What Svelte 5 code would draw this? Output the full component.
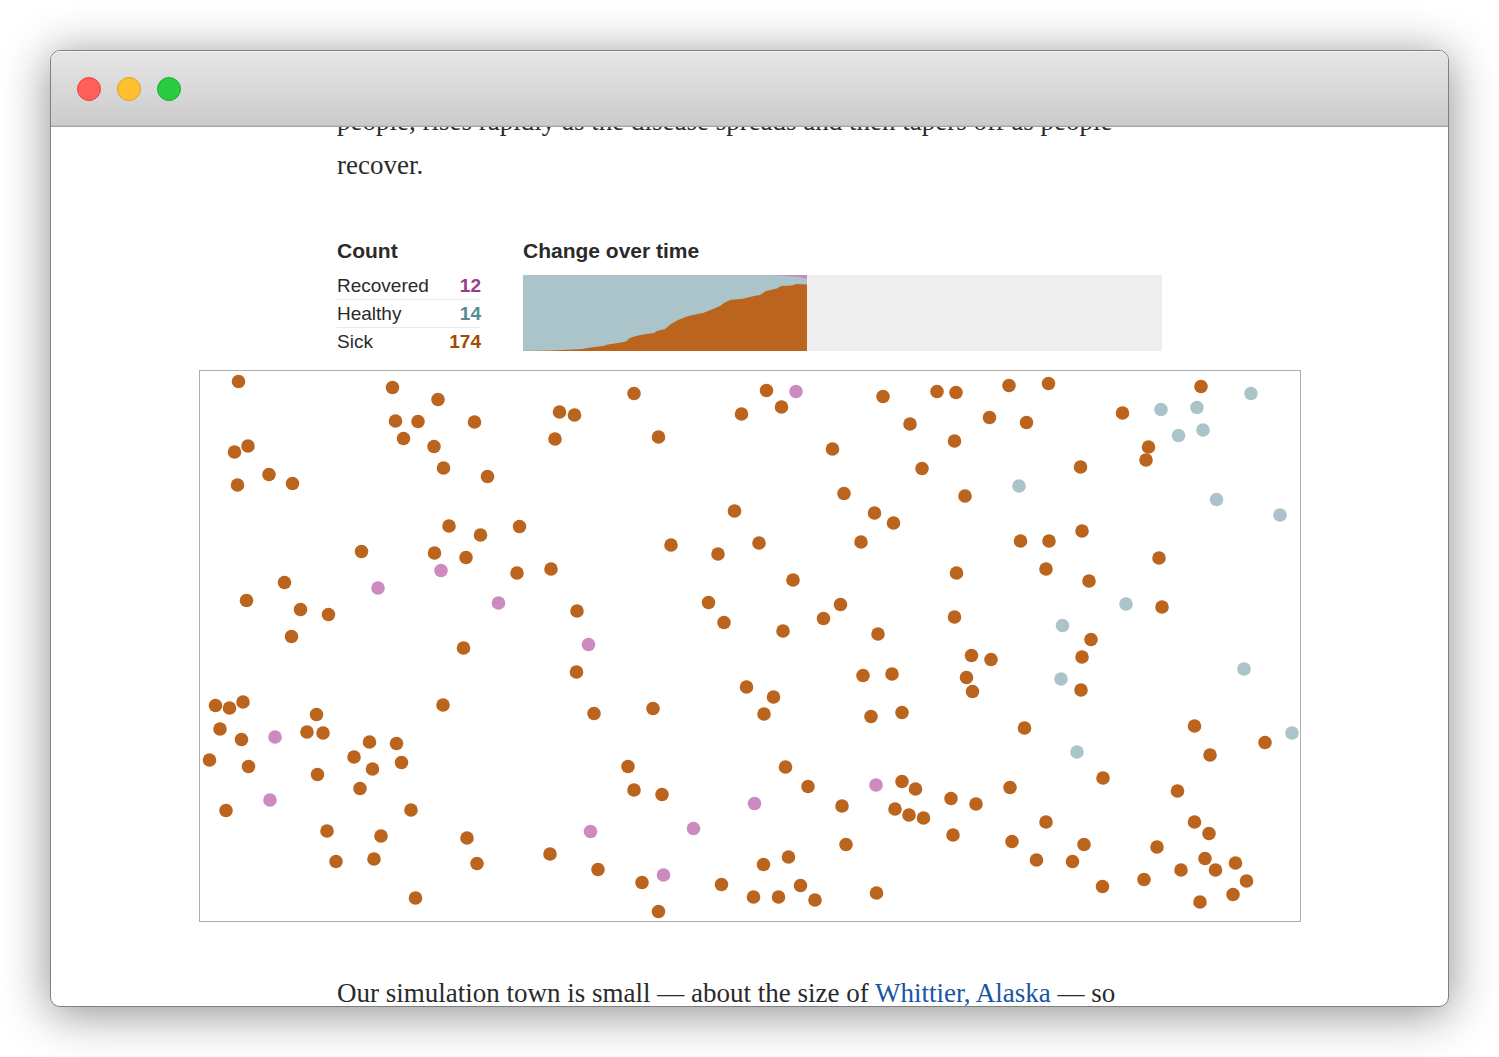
<script lang="ts">
	type Status = 'sick' | 'healthy' | 'recovered'

	const counts: { label: string; status: Status; value: number }[] = [
		{ label: 'Recovered', status: 'recovered', value: 12 },
		{ label: 'Healthy', status: 'healthy', value: 14 },
		{ label: 'Sick', status: 'sick', value: 174 }
	]

	// positions inside the 1100 x 550 town
	const people: Record<Status, number[][]> = {
		sick: [
			[38.5, 10.5], [192.5, 16.5], [238, 28.5], [195.5, 50], [218, 50.5], [203.5, 67.5], [274.5, 51],
			[234, 75.5], [243.5, 97], [287.5, 105.5], [48, 75], [34.5, 81], [69, 103.5], [92.5, 112.5],
			[37.5, 114], [359.5, 41], [374.5, 44], [355, 68], [434, 22.5], [458.5, 66], [566.5, 19.5],
			[581.5, 36], [541.5, 43], [683, 25.5], [737, 20.5], [756, 21.5], [809, 14.5], [848.5, 12.5],
			[1001, 15.5], [710, 53], [789.5, 46.5], [826.5, 51.5], [922.5, 42], [632.5, 78], [754.5, 70],
			[722, 97.5], [880.5, 96], [948.5, 76], [946, 89], [644, 122.5], [765, 125],

			[249, 155], [280.5, 164], [319.5, 155.5], [161.5, 180.5], [234.5, 182], [266, 186.5],
			[317, 202], [351, 198], [84.5, 211.5], [46.5, 229.5], [100.5, 238.5], [128.5, 243.5],
			[91.5, 265.5], [263.5, 277], [377, 240], [376.5, 301], [471, 174], [534.5, 140], [559, 172],
			[518, 183], [593, 209], [508.5, 231.5], [524, 251.5], [583, 260], [623.5, 247.5],
			[640.5, 233.5], [661, 171], [674.5, 142], [693.5, 152], [678, 263], [663, 304.5],
			[692, 303], [756.5, 202], [754.5, 246], [771.5, 284.5], [791, 288.5], [766.5, 306.5],
			[772.5, 320.5], [820.5, 170], [849, 170], [882, 160], [846, 198], [889, 210], [891, 268.5],
			[882, 286], [881, 319], [959, 187], [962, 236],

			[243, 334], [394, 342.5], [453, 337.5], [546.5, 316], [573.5, 326], [564, 343], [671, 345.5],
			[702, 341.5], [824.5, 357], [994.5, 355], [1010, 384], [1065, 371.5], [15.5, 334.5],
			[29.5, 337], [43, 331], [20, 358], [41.5, 368.5], [9.5, 389], [48.5, 395.5], [26, 439.5],
			[116.5, 343.5], [107, 361], [123, 362], [117.5, 403.5], [169.5, 371], [154, 386],
			[172.5, 398], [196.5, 372.5], [201.5, 391.5], [160, 417.5], [211, 439], [127, 460],
			[181, 465], [136, 490.5], [174, 488], [215.5, 527], [267, 467], [277, 492.5],

			[350, 483], [398, 498.5], [428, 395.5], [434, 419], [462, 423.5], [442, 511.5], [458.5, 540.5],
			[585.5, 396], [608, 415.5], [642, 435], [646, 473.5], [588.5, 486], [563.5, 493.5],
			[521.5, 513.5], [553.5, 526], [578.5, 526], [600.5, 514.5], [615, 529], [676.5, 522],

			[702, 410.5], [715.5, 418], [695, 438], [709, 444], [723.5, 447], [751, 427.5], [776, 433],
			[753, 464], [810, 416.5], [812, 470.5], [846, 451], [836.5, 489], [872.5, 490.5],
			[884, 473.5], [903, 407], [902.5, 515.5], [977.5, 420], [994.5, 451], [1009, 462.5],
			[957, 476], [944, 508.5], [981, 499], [1005, 487.5], [1015.5, 499], [1035.5, 492],
			[1046.5, 510], [1033, 523.5], [1000, 531]
		],
		healthy: [
			[1051, 22.5], [961, 38.5], [997, 36.5], [1003, 59], [978.5, 64.5], [819, 115], [1016.5, 128.5],
			[1080, 144], [926, 233], [862.5, 254.5], [861, 308], [1044, 298], [1092, 362], [877, 381]
		],
		recovered: [
			[596, 20.5], [178, 217], [241, 199.5], [298.5, 232], [388.5, 273.5], [75, 366], [70, 429],
			[390.5, 460.5], [493.5, 457.5], [554.5, 432.5], [463.5, 504], [676, 414]
		]
	}
</script>

<div class="desktop">
	<div class="window">
		<header class="titlebar">
			<button class="light close" aria-label="Close"></button>
			<button class="light minimize" aria-label="Minimize"></button>
			<button class="light zoom" aria-label="Zoom"></button>
		</header>

		<main class="page">
			<p class="prose first">
				people, rises rapidly as the disease spreads and then tapers off as people recover.
			</p>

			<section class="stats">
				<div>
					<h2>Count</h2>
					<table>
						<tbody>
							{#each counts as { label, status, value }}
								<tr>
									<th scope="row">{label}</th>
									<td class={status}>{value}</td>
								</tr>
							{/each}
						</tbody>
					</table>
				</div>
				<div>
					<h2>Change over time</h2>
					<svg class="history" viewBox="0 0 639 76" preserveAspectRatio="none" aria-hidden="true">
						<rect class="fill-healthy" width="284" height="76" />
						<path class="fill-recovered" d="M245 0L262 1L275 2L284 4V0Z" />
						<path
							class="fill-sick"
							d="M0 76L28 75.6L33 75.2L60 74L64 73L70 72.3L80 71L85 69.5L95 68L103 66.5L107 63L113 61L120 59.5L131 58L134 56L142 54L148 49L155 45L164 41.5L170 40L180 38L190 34L197 31L201 28L207 25L220 23.7L231 21L237 20L243 16L254 13.5L258 11L269 10.5L273 9L284 9.5V76Z"
						/>
					</svg>
				</div>
			</section>

			<svg class="town" viewBox="0 0 1100 550" role="img" aria-label="Simulated town">
				{#each Object.entries(people) as [status, dots]}
					<g class={'fill-' + status}>
						{#each dots as [x, y]}
							<circle cx={x} cy={y} r="6.8" />
						{/each}
					</g>
				{/each}
			</svg>

			<p class="prose">
				Our simulation town is small — about the size of <a href="#whittier">Whittier, Alaska</a> — so
			</p>
		</main>
	</div>
</div>

<style>
	:global(body) {
		background: #fff;
	}

	.desktop {
		box-sizing: border-box;
		height: 100vh;
		padding: 50px;
		overflow: hidden;
	}

	.window {
		box-sizing: border-box;
		display: flex;
		flex-direction: column;
		height: 100%;
		border: 1px solid #808080;
		border-radius: 10px;
		background: #fff;
		overflow: hidden;
		box-shadow: 0 6px 48px rgba(0, 0, 0, 0.46);
	}

	.titlebar {
		box-sizing: border-box;
		flex: none;
		display: flex;
		align-items: center;
		gap: 16px;
		height: 76px;
		padding: 1px 26px 0;
		border-bottom: 1px solid #a3a3a3;
		background: linear-gradient(#e6e6e6, #cbcbcb);
		box-shadow:
			inset 0 1px #f4f4f4,
			inset 0 -1px #bebebe;
	}

	.light {
		box-sizing: border-box;
		width: 24px;
		height: 24px;
		padding: 0;
		border: 1px solid;
		border-radius: 50%;
	}

	.close {
		background: #ff6059;
		border-color: #e2463f;
	}

	.minimize {
		background: #ffbf2f;
		border-color: #dfa023;
	}

	.zoom {
		background: #28cd41;
		border-color: #1dad2b;
	}

	.page {
		flex: 1;
		min-height: 0;
		overflow: hidden;
		color: #2a2a2a;
		font-family: 'Liberation Sans', Arial, sans-serif;
	}

	.prose {
		max-width: 825px;
		margin: 0 auto;
		font: 27px/44px 'Liberation Serif', serif;
	}

	/* scrolled partly under the title bar */
	.first {
		margin-top: -28px;
	}

	a {
		color: #1955a5;
		text-decoration: none;
	}

	.stats {
		display: grid;
		grid-template-columns: 144px 1fr;
		column-gap: 42px;
		max-width: 825px;
		margin: 50px auto 14px;
	}

	h2 {
		margin: 0;
		font-size: 21px;
		line-height: 28px;
	}

	table {
		width: 100%;
		margin-top: 7px;
		border-collapse: separate;
		border-spacing: 0;
		font-size: 19px;
		line-height: 27px;
	}

	th,
	td {
		padding: 0;
		border-bottom: 1px solid #e9e9e9;
	}

	tr:last-child > * {
		border-bottom-color: transparent;
	}

	th {
		font-weight: 400;
		text-align: left;
	}

	td {
		font-weight: 700;
		text-align: right;
	}

	td.recovered {
		color: #963c8c;
	}

	td.healthy {
		color: #528c94;
	}

	td.sick {
		color: #a04c00;
	}

	.history {
		display: block;
		width: 100%;
		height: 76px;
		margin-top: 10px;
		background: #eee;
	}

	.fill-sick {
		fill: #bb641d;
	}

	.fill-healthy {
		fill: #abc4c9;
	}

	.fill-recovered {
		fill: #cc8ac0;
	}

	.town {
		box-sizing: border-box;
		display: block;
		width: 100%;
		max-width: 1102px;
		margin: 0 auto 49px;
		border: 1px solid #adadad;
	}
</style>
